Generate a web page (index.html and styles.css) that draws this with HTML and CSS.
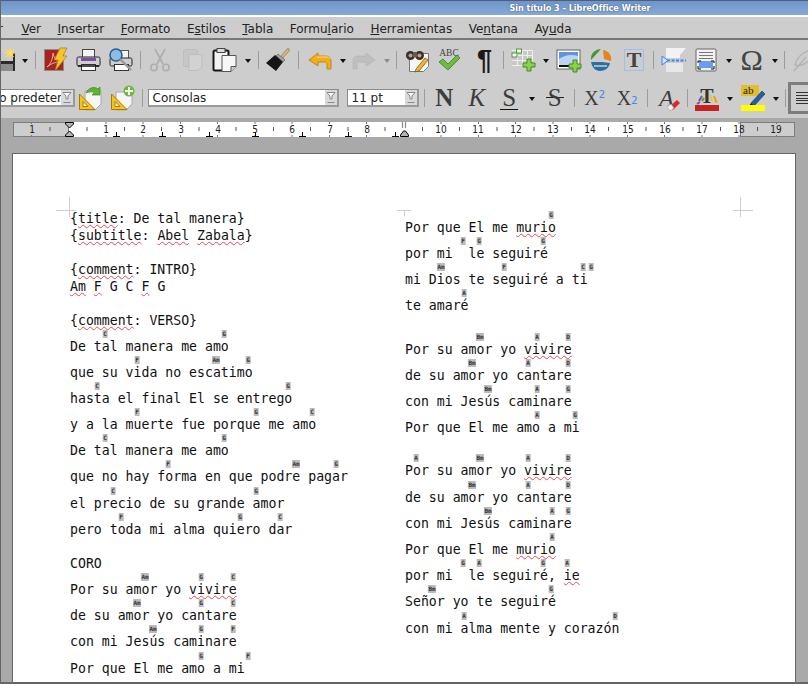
FILE: index.html
```html
<!DOCTYPE html>
<html lang="es">
<head>
    <meta charset="UTF-8">
    <title>Sin título 3 - LibreOffice Writer</title>
    <link rel="stylesheet" href="styles.css">
</head>
<body>
    <div class="titlebar"><span class="title-text">Sin título 3 - LibreOffice Writer</span></div>

    <div class="menubar">
        <span class="menu-cut">r</span>
        <span><u>V</u>er</span>
        <span><u>I</u>nsertar</span>
        <span><u>F</u>ormato</span>
        <span>E<u>s</u>tilos</span>
        <span><u>T</u>abla</span>
        <span>Formu<u>l</u>ario</span>
        <span><u>H</u>erramientas</span>
        <span>Ve<u>n</u>tana</span>
        <span>Ay<u>u</u>da</span>
    </div>

    <!-- Barra estandar -->
    <div class="toolbar row-one">
        <div class="btn"><svg width="26" height="26" viewBox="-3 0 26 26"><rect x="0" y="6" width="24" height="18" fill="#2b2b2b"/><rect x="3" y="6" width="18" height="8" fill="#c9c9c9"/><rect x="3" y="17" width="18" height="7" fill="#8c8c8c"/><circle cx="18" cy="6" r="3.5" fill="#f6d54a"/><path d="M18 0v12M12 6h12M14 2l8 8M22 2l-8 8" stroke="#f9e27c" stroke-width=".8"/></svg></div>
        <div class="arrow"></div>
        <div class="sep"></div>
        <div class="btn"><svg width="26" height="26" viewBox="0 0 26 26"><rect x="2.5" y="2.5" width="19" height="21" fill="#a92421" stroke="#8d8d8d"/><path d="M5 20c4-3 6-9 6-14 1 5 3 8 7 9-4 0-8 1-13 5z" fill="none" stroke="#e9b0a8" stroke-width="1"/><path d="M18 1h7l-4 8h4L13 24l3-11h-4z" fill="#f5c62a" stroke="#a8741a" stroke-width=".7"/></svg></div>
        <div class="btn"><svg width="26" height="26" viewBox="0 0 26 26"><rect x="7.5" y="2.5" width="12" height="8" fill="#f4f4f4" stroke="#444"/><rect x="2" y="10" width="23" height="9" rx="1.5" fill="#cfcfcf" stroke="#222"/><rect x="6" y="11" width="15" height="3" fill="#7b4fa6"/><rect x="6.5" y="17.5" width="14" height="6" fill="#fff" stroke="#333"/><path d="M3 19h21" stroke="#111" stroke-width="1.5"/></svg></div>
        <div class="btn"><svg width="26" height="26" viewBox="0 0 26 26"><rect x="10.5" y="3.5" width="11" height="8" fill="#f4f4f4" stroke="#555"/><rect x="3" y="11" width="22" height="8" rx="1.5" fill="#cfcfcf" stroke="#222"/><rect x="7.5" y="17.5" width="14" height="6" fill="#fff" stroke="#333"/><circle cx="9" cy="8" r="6" fill="#8fbce6" stroke="#28608f" stroke-width="1.6"/><path d="M13 12l11 11" stroke="#999" stroke-width="2.4"/></svg></div>
        <div class="sep"></div>
        <div class="btn"><svg width="26" height="26" viewBox="0 0 26 26" fill="none" stroke="#adadad" stroke-width="1.6"><path d="M8 2l8 15M18 2l-8 15"/><circle cx="7" cy="20.5" r="3.2"/><circle cx="19" cy="20.5" r="3.2"/></svg></div>
        <div class="btn"><svg width="26" height="26" viewBox="0 0 26 26"><rect x="3.5" y="2.5" width="14" height="17" rx="1" fill="#c6c6c6" stroke="#bdbdbd"/><path d="M9 7.500h13v12l-4 4H9z" fill="#d2d2d2" stroke="#bdbdbd"/></svg></div>
        <div class="btn"><svg width="26" height="26" viewBox="0 0 26 26"><rect x="1.500" y="3.500" width="15" height="20" rx="1.500" fill="#f2f2f2" stroke="#161616" stroke-width="2"/><rect x="5" y="1.500" width="8" height="4" fill="#ddd" stroke="#444"/><path d="M10 8.500h14v11l-5 5h-9z" fill="#f7f7f7" stroke="#555"/><path d="M24 19.500h-5v5" fill="#ccc" stroke="#555"/></svg></div>
        <div class="arrow"></div>
        <div class="sep"></div>
        <div class="btn"><svg width="26" height="26" viewBox="0 0 26 26"><path d="M16 9l6-7c2-1 3 0 2 2l-6 7z" fill="#d8b47e" stroke="#8a6c3e" stroke-width=".6"/><path d="M13 7l7 6-2 2-7-6z" fill="#a3a3a3" stroke="#555" stroke-width=".6"/><path d="M10 8l8 7-7 9-10-8z" fill="#151515"/></svg></div>
        <div class="sep"></div>
        <div class="btn btn-undo"><svg width="26" height="26" viewBox="0 0 26 26"><path d="M11 6L2 13l9 6v-4h7c1 0 2 1 2 2v5h4v-8c0-3-2-5-5-5h-8z" fill="#f0ae1a" stroke="#b77a0c" stroke-width=".8"/><path d="M10 10h10c2 0 3 1 3 2" stroke="#fbe08a" fill="none"/></svg></div>
        <div class="arrow"></div>
        <div class="btn btn-redo"><svg width="26" height="26" viewBox="0 0 26 26"><path d="M15 6l9 7-9 6v-4H8c-1 0-2 1-2 2v5H2v-8c0-3 2-5 5-5h8z" fill="#bfbfbf" stroke="#b5b5b5" stroke-width=".8"/></svg></div>
        <div class="arrow off"></div>
        <div class="sep"></div>
        <div class="btn"><svg width="26" height="26" viewBox="0 0 26 26"><path d="M5.500 6.500h19v13l-5 5h-14z" fill="#f6f6f6" stroke="#777"/><circle cx="6.500" cy="8.500" r="4.500" fill="#3a2f28"/><circle cx="15.500" cy="8.500" r="4.500" fill="#3a2f28"/><rect x="9" y="5" width="4" height="5" fill="#6a5a4e"/><circle cx="6.500" cy="8.500" r="2" fill="#b9a48e"/><circle cx="15.500" cy="8.500" r="2" fill="#b9a48e"/><path d="M12 22l9-11 3 2-9 11-4 1z" fill="#f0b52c" stroke="#6d4a10" stroke-width=".7"/></svg></div>
        <div class="btn"><svg width="26" height="26" viewBox="0 0 26 26"><text class="abc" x="13" y="9" text-anchor="middle">ABC</text><path d="M3 15l4-3 5 5 9-9 3 3-12 12z" fill="#6fbb3f" stroke="#3b7e26" stroke-width=".8"/></svg></div>
        <div class="btn btn-wide"><span class="pilcrow">¶</span></div>
        <div class="sep"></div>
        <div class="btn"><svg width="26" height="26" viewBox="0 0 26 26"><rect x="2" y="3" width="21" height="16" fill="#c9c9c9"/><path d="M2 3.500h21M2 8.500h21M2 13.500h21M2 18.500h14M7.500 3v16M12.500 3v16M17.500 3v16M22.500 3v11" stroke="#efefef" fill="none"/><rect x="6.500" y="2" width="5" height="4" fill="#fff" stroke="#4d9b2e"/><rect x="2" y="6" width="5" height="4" fill="#fff" stroke="#4d9b2e"/><path d="M17 12h4v4h4v4h-4v4h-4v-4h-4v-4h4z" fill="#8ed04c" stroke="#3e8a22"/></svg></div>
        <div class="arrow"></div>
        <div class="btn"><svg width="26" height="26" viewBox="0 0 26 26"><rect x="1" y="3" width="23" height="19" fill="#fff" stroke="#666"/><rect x="3" y="5" width="19" height="13" fill="#5f94de"/><path d="M3 12c6-4 12-5 19-3v9H3z" fill="#bcd6f2"/><rect x="3" y="18" width="19" height="2" fill="#111"/><path d="M17 13h4v4h4v4h-4v4h-4v-4h-4v-4h4z" fill="#8ed04c" stroke="#3e8a22"/></svg></div>
        <div class="btn"><svg width="26" height="26" viewBox="0 0 26 26"><path d="M3 13c-1-6 4-11 10-11z" fill="#3f9a32"/><path d="M15 3c6 1 9 6 8 11l-7-2z" fill="#e8821e"/><path d="M3 15h11l8 1c-1 5-5 8-10 8-5 0-8-4-9-9z" fill="#2c6f9e"/><path d="M6 19h13" stroke="#bcd3e6" stroke-width="1.500"/></svg></div>
        <div class="btn"><svg width="26" height="26" viewBox="0 0 26 26"><path d="M3 2.500h20M3 23.500h20M3.500 2v22M22.500 2v22" stroke="#9cc0ec" fill="none"/><text class="tbox" x="13" y="20" text-anchor="middle">T</text></svg></div>
        <div class="sep"></div>
        <div class="btn"><svg width="26" height="26" viewBox="0 0 26 26"><path d="M5 1h20l-6 7v3H5z" fill="#f2f2f2"/><rect x="5" y="16" width="17" height="9" fill="#e8e8e8"/><path d="M6 13.500h19" stroke="#3d86ea" stroke-width="2" stroke-dasharray="3 1.500"/><path d="M1 9l6 4.500L1 18z" fill="#cfe2fa" stroke="#3d86ea"/></svg></div>
        <div class="btn"><svg width="26" height="26" viewBox="0 0 26 26"><rect x="3" y="2" width="20" height="22" rx="1" fill="#f2f2f2" stroke="#666"/><path d="M6 5.500h14M6 8.500h14M6 11.500h14" stroke="#777"/><rect x="6" y="14" width="14" height="7" fill="#6a9cf0"/><path d="M5 16v-2h3M21 16v-2h-3M5 19v3h3M21 19v3h-3" stroke="#111" fill="none"/></svg></div>
        <div class="arrow"></div>
        <div class="btn"><span class="omega">Ω</span></div>
        <div class="arrow"></div>
        <div class="sep"></div>
        <div class="btn"><svg width="26" height="26" viewBox="0 0 26 26" fill="none" stroke="#b3b3b3" stroke-width="1.400"><path d="M3 18C5 10 12 4 22 2c-1 9-7 15-15 17zM2 24l12-14"/></svg></div>
    </div>

    <!-- Barra de formato -->
    <div class="toolbar row-two">
        <div class="combo combo-style"><span class="combo-text">Estilo predeterminado</span><span class="combo-btn"><svg width="12" height="15" viewBox="0 0 12 15"><path d="M2 2.500h8L7 6v3H5V6z" fill="#fff" stroke="#888"/><path d="M2.500 12.500h7" stroke="#888"/></svg></span></div>
        <div class="btn btn-first"><svg width="26" height="28" viewBox="0 0 26 28"><path d="M8 7h16v13l-6 6H8z" fill="#f5f5f5" stroke="#aaa"/><path d="M2.500 10v15.500H18z" fill="#f3c41d" stroke="#a9780d"/><path d="M6 17.500v5h5z" fill="#f5f5f5" stroke="#a9780d"/><path d="M9 9c2-5 8-7 12-4l2-2v8h-8l2-2c-2-2-5-1-8 0z" fill="#5fb52f" stroke="#3a8a1c" stroke-width=".7"/></svg></div>
        <div class="btn"><svg width="26" height="28" viewBox="0 0 26 28"><path d="M6 8h16v12l-6 6H6z" fill="#f5f5f5" stroke="#aaa"/><path d="M1.500 10v15.500H17z" fill="#f3c41d" stroke="#a9780d"/><path d="M5 17.500v5h5z" fill="#f5f5f5" stroke="#a9780d"/><circle cx="19" cy="7" r="5.500" fill="#6cbb3a"/><path d="M19 3v8M15 7h8" stroke="#fff" stroke-width="2"/></svg></div>
        <div class="sep"></div>
        <div class="combo combo-font"><span class="combo-text">Consolas</span><span class="combo-btn"><svg width="12" height="15" viewBox="0 0 12 15"><path d="M2 2.500h8L7 6v3H5V6z" fill="#fff" stroke="#888"/><path d="M2.500 12.500h7" stroke="#888"/></svg></span></div>
        <div class="combo combo-size"><span class="combo-text">11 pt</span><span class="combo-btn"><svg width="12" height="15" viewBox="0 0 12 15"><path d="M2 2.500h8L7 6v3H5V6z" fill="#fff" stroke="#888"/><path d="M2.500 12.500h7" stroke="#888"/></svg></span></div>
        <div class="sep"></div>
        <div class="btn letter bold">N</div>
        <div class="btn letter italic">K</div>
        <div class="btn letter under">S</div>
        <div class="arrow"></div>
        <div class="btn letter strike">S</div>
        <div class="sep"></div>
        <div class="btn letter script">X<sup>2</sup></div>
        <div class="btn letter script">X<sub>2</sub></div>
        <div class="sep"></div>
        <div class="btn"><svg width="26" height="28" viewBox="0 0 26 28"><text class="clear-a" x="5" y="22">A</text><path d="M16 22l7-6 3 3-7 7z" fill="#d92b2b"/><path d="M13 23l4-3 3 4-4 3z" fill="#f4f4f4" stroke="#999" stroke-width=".6"/></svg></div>
        <div class="sep"></div>
        <div class="btn"><svg width="26" height="28" viewBox="0 0 26 28"><text class="color-t" x="13" y="19" text-anchor="middle">T</text><path d="M5 17l3-5M3 20l3-2" stroke="#7b4fa6" stroke-width="2"/><path d="M20 12l2 5M23 18l-2-1" stroke="#ef9a1d" stroke-width="2"/><path d="M16 11l2 6" stroke="#e5c91f" stroke-width="2"/><path d="M8 17l2-3" stroke="#43a23a" stroke-width="2"/><rect x="1" y="21" width="24" height="6" fill="#c62222"/></svg></div>
        <div class="arrow"></div>
        <div class="btn"><svg width="26" height="28" viewBox="0 0 26 28"><rect x="1" y="1" width="18" height="11" fill="#e0be2e"/><text class="ab" x="3" y="10">ab</text><path d="M11 19l11-12 3 3-11 12z" fill="#24609e" stroke="#12355c" stroke-width=".6"/><path d="M11 19l3 3-5 0z" fill="#222"/><rect x="1" y="21" width="24" height="6" fill="#ffff00"/></svg></div>
        <div class="arrow"></div>
        <div class="sep"></div>
        <div class="linebox"><span></span><span></span><span></span><span></span><span></span></div>
    </div>

    <!-- Regla -->
    <div class="ruler-band">
        <svg class="ruler" width="808" height="16" viewBox="0 0 808 16">
            <rect x="68" y="0" width="672" height="15" fill="#fff"/>
            <rect x="13.500" y=".5" width="55" height="14" fill="#cdcdcd" stroke="#7d7d7d"/>
            <rect x="740.500" y=".5" width="54" height="14" fill="#cdcdcd" stroke="#7d7d7d"/>
            <path stroke="#555" fill="none" d="M50 5v4M87 5v4M124.500 5v4M161.500 5v4M199 5v4M236 5v4M273.500 5v4M310.500 5v4M348 5v4M385 5v4M422.500 5v4M459.500 5v4M497 5v4M534 5v4M571.500 5v4M608.500 5v4M646 5v4M683 5v4M720.500 5v4M757.500 5v4"/>
            <path stroke="#777" fill="none" d="M31.500 0v2M31.500 13v2M106 0v2M106 13v2M143 0v2M143 13v2M180.500 0v2M180.500 13v2M217.500 0v2M217.500 13v2M255 0v2M255 13v2M292 0v2M292 13v2M329.500 0v2M329.500 13v2M366.500 0v2M366.500 13v2M441 0v2M441 13v2M478.500 0v2M478.500 13v2M515.500 0v2M515.500 13v2M553 0v2M553 13v2M590 0v2M590 13v2M627.500 0v2M627.500 13v2M664.500 0v2M664.500 13v2M702 0v2M702 13v2M739 0v2M739 13v2M776.500 0v2M776.500 13v2"/>
            <path stroke="#000" fill="none" d="M116.500 10v4M113 14.500h7M162.500 10v4M159 14.500h7M209.500 10v4M206 14.500h7M255.500 10v4M252 14.500h7M302.500 10v4M299 14.500h7M348.500 10v4M345 14.500h7M395.500 10v4M392 14.500h7"/>
            <g class="rnum" text-anchor="middle">
                <text x="32" y="11">1</text><text x="106" y="11">1</text><text x="143" y="11">2</text><text x="181" y="11">3</text><text x="218" y="11">4</text><text x="255" y="11">5</text><text x="292" y="11">6</text><text x="330" y="11">7</text><text x="367" y="11">8</text><text x="441" y="11">10</text><text x="478" y="11">11</text><text x="516" y="11">12</text><text x="553" y="11">13</text><text x="590" y="11">14</text><text x="628" y="11">15</text><text x="665" y="11">16</text><text x="702" y="11">17</text><text x="739" y="11">18</text><text x="776" y="11">19</text>
            </g>
            <path d="M65.500.5h8v1.500L69.500 6l-4-4zM65.500 14.500h8V13l-4-4-4 4z" fill="#b5b5b5" stroke="#000"/>
            <path d="M402.500 0v6M405.500 0v6" stroke="#8a8a8a" stroke-width="1.200"/>
            <path d="M400.500 14.500h8V13l-3-4h-2l-3 4z" fill="#b5b5b5" stroke="#000"/>
        </svg>
    </div>

    <div class="workspace">
        <div class="page">
            <svg class="marks" width="784" height="70" viewBox="0 0 784 70">
                <path stroke="#cfcfcf" fill="none" d="M43 56.500h20M56.500 43v20M384 56.500h14M391.500 56.500v6M720 56.500h20M727.500 43v20"/>
            </svg>
            <div class="col">
                <div class="plain">{<u>title</u>: De tal manera}</div>
                <div class="plain">{<u>subtitle</u>: <u>Abel</u> <u>Zabala</u>}</div>
                <div class="plain block">{<u>comment</u>: INTRO}</div>
                <div class="plain"><u>Am</u> <u>F</u> G C <u>F</u> G</div>
                <div class="plain block">{<u>comment</u>: VERSO}</div>

                <div class="lyric first"><span class="ch" style="left:35px">C</span><span class="ch" style="left:154px">G</span>De tal manera me amo</div>
                <div class="lyric"><span class="ch" style="left:67px">F</span><span class="ch" style="left:146px">Am</span><span class="ch" style="left:178px">G</span>que su vida no escatimo</div>
                <div class="lyric"><span class="ch" style="left:27px">C</span><span class="ch" style="left:218px">G</span>hasta el final El se entrego</div>
                <div class="lyric"><span class="ch" style="left:67px">F</span><span class="ch" style="left:186px">G</span><span class="ch" style="left:242px">C</span>y a la muerte fue porque me amo</div>
                <div class="lyric"><span class="ch" style="left:35px">C</span><span class="ch" style="left:154px">G</span>De tal manera me amo</div>
                <div class="lyric"><span class="ch" style="left:98px">F</span><span class="ch" style="left:226px">Am</span><span class="ch" style="left:266px">G</span>que no hay forma en que podre pagar</div>
                <div class="lyric"><span class="ch" style="left:43px">C</span><span class="ch" style="left:186px">G</span>el precio de su grande amor</div>
                <div class="lyric"><span class="ch" style="left:51px">F</span><span class="ch" style="left:170px">G</span><span class="ch" style="left:210px">C</span>pero toda mi alma quiero dar</div>

                <div class="plain coro">CORO</div>
                <div class="lyric first"><span class="ch" style="left:75px">Am</span><span class="ch" style="left:131px">G</span><span class="ch" style="left:163px">C</span>Por su amor yo <u>vivire</u></div>
                <div class="lyric"><span class="ch" style="left:67px">Am</span><span class="ch" style="left:131px">G</span><span class="ch" style="left:163px">C</span>de su amor yo cantare</div>
                <div class="lyric"><span class="ch" style="left:83px">Am</span><span class="ch" style="left:131px">G</span><span class="ch" style="left:163px">F</span>con mi Jesús caminare</div>
                <div class="lyric"><span class="ch" style="left:131px">G</span><span class="ch" style="left:178px">F</span>Por que El me amo a mi</div>
            </div>
            <div class="col col-right">
                <div class="lyric"><span class="ch" style="left:146px">G</span>Por que El me <u>murio</u></div>
                <div class="lyric"><span class="ch" style="left:58px">F</span><span class="ch" style="left:74px">G</span><span class="ch" style="left:138px">G</span>por mi  le seguiré</div>
                <div class="lyric"><span class="ch" style="left:36px">Am</span><span class="ch" style="left:99px">F</span><span class="ch" style="left:178px">C</span><span class="ch" style="left:186px">G</span>mi Dios te seguiré a ti</div>
                <div class="lyric"><span class="ch" style="left:59px">A</span>te amaré</div>

                <div class="lyric stanza"><span class="ch" style="left:75px">Bm</span><span class="ch" style="left:132px">A</span><span class="ch" style="left:163px">D</span>Por su amor yo <u>vivire</u></div>
                <div class="lyric"><span class="ch" style="left:67px">Bm</span><span class="ch" style="left:123px">A</span><span class="ch" style="left:163px">D</span>de su amor yo cantare</div>
                <div class="lyric"><span class="ch" style="left:83px">Bm</span><span class="ch" style="left:132px">A</span><span class="ch" style="left:163px">G</span>con mi Jesús caminare</div>
                <div class="lyric"><span class="ch" style="left:132px">A</span><span class="ch" style="left:170px">G</span>Por que El me amo a mi</div>

                <div class="lyric stanza"><span class="ch" style="left:11px">A</span><span class="ch" style="left:75px">Bm</span><span class="ch" style="left:123px">A</span><span class="ch" style="left:163px">D</span>Por su amor yo <u>vivire</u></div>
                <div class="lyric"><span class="ch" style="left:67px">Bm</span><span class="ch" style="left:123px">A</span><span class="ch" style="left:163px">D</span>de su amor yo cantare</div>
                <div class="lyric"><span class="ch" style="left:83px">Bm</span><span class="ch" style="left:147px">A</span><span class="ch" style="left:163px">G</span>con mi Jesús caminare</div>
                <div class="lyric"><span class="ch" style="left:147px">A</span>Por que El me <u>murio</u></div>
                <div class="lyric"><span class="ch" style="left:58px">G</span><span class="ch" style="left:74px">A</span><span class="ch" style="left:138px">G</span><span class="ch" style="left:162px">A</span>por mi  le seguiré, <u>ie</u></div>
                <div class="lyric"><span class="ch" style="left:27px">Bm</span><span class="ch" style="left:146px">G</span>Señor yo te seguiré</div>
                <div class="lyric"><span class="ch" style="left:59px">A</span><span class="ch" style="left:210px">D</span>con mi alma mente y corazón</div>
            </div>
        </div>
    </div>
</body>
</html>
```

FILE: styles.css
```css
html, body {
    margin: 0;
    height: 684px;
    overflow: hidden;
}
body {
    display: flex;
    flex-direction: column;
    font-family: "DejaVu Sans", sans-serif;
    background-color: #cdcdcd;
    color: #222;
    border-left: 1px solid #666;
    border-bottom: 2px solid #666;
    box-sizing: border-box;
}

.titlebar {
    flex: none;
    height: 17px;
    box-sizing: border-box;
    padding-left: 351px;
    display: flex;
    justify-content: center;
    align-items: center;
    background: linear-gradient(#6f95c9, #86a9d6);
    border-top: 1px solid #4d5f7b;
    border-bottom: 2px solid #fff;
}
.title-text {
    font-family: "DejaVu Sans Condensed", "DejaVu Sans", sans-serif;
    font-size: 9px;
    font-weight: bold;
    color: #fff;
    text-shadow: 0 0 2px #456;
}

.menubar {
    flex: none;
    height: 23px;
    box-sizing: border-box;
    padding-top: 2px;
    display: flex;
    align-items: center;
    gap: 16.5px;
    font-size: 12px;
    margin-left: -3px;
    border-bottom: 2px solid #777;
}
.menu-cut {
    margin-right: 2px;
}

.toolbar {
    flex: none;
    display: flex;
    align-items: center;
    overflow: hidden;
}
.row-one {
    height: 40px;
}
.row-one .btn:first-child {
    margin-left: -15px;
}
.row-two {
    height: 38px;
    box-sizing: border-box;
    padding-bottom: 2px;
}
.btn {
    flex: none;
    width: 32.5px;
    display: flex;
    justify-content: center;
    align-items: center;
}
.btn-wide {
    width: 34px;
}
.btn-undo {
    margin-left: 2px;
}
.btn-redo {
    margin-left: -2px;
}
.arrow {
    flex: none;
    width: 13px;
    display: flex;
    justify-content: center;
}
.arrow::after {
    content: "";
    border-left: 3.5px solid transparent;
    border-right: 3.5px solid transparent;
    border-top: 4px solid #111;
    margin-top: 2px;
}
.arrow.off::after {
    border-top-color: #8c8c8c;
}
.sep {
    flex: none;
    width: 7.5px;
    height: 18px;
    background: linear-gradient(#9c9c9c, #9c9c9c) center / 1px 100% no-repeat;
}

.abc {
    font-family: "Liberation Serif", serif;
    font-size: 9.5px;
    fill: #444;
}
.pilcrow {
    font-family: "Liberation Sans", sans-serif;
    font-weight: bold;
    font-size: 27px;
    line-height: 26px;
    margin-left: 4px;
    color: #1a1a1a;
}
.omega {
    font-family: "Liberation Serif", serif;
    font-size: 30px;
    line-height: 26px;
    color: #444;
}
.tbox {
    font-family: "Liberation Serif", serif;
    font-weight: bold;
    font-size: 22px;
    fill: #444;
}

.combo {
    flex: none;
    height: 18px;
    display: flex;
    align-items: stretch;
    box-sizing: border-box;
    background-color: #fff;
    border: 1px solid #8a8a8a;
    border-right: 2px solid #9a9a9a;
    border-bottom: 2px solid #9a9a9a;
    font-size: 12px;
    line-height: 16px;
}
.combo-text {
    flex: 1;
    padding-left: 4px;
    overflow: hidden;
    white-space: nowrap;
}
.combo-btn {
    flex: none;
    width: 12px;
    background-color: #d9d9d9;
}
.combo-style {
    width: 106px;
    margin-left: -32px;
}
.combo-font {
    width: 191px;
    margin-left: 1px;
}
.combo-size {
    width: 72px;
    margin-left: 8px;
    margin-right: 2px;
}
.btn-first {
    margin-left: -1px;
}

.letter {
    font-family: "Liberation Serif", serif;
    font-size: 25px;
    color: #3c3c3c;
    line-height: 28px;
}
.bold {
    font-weight: bold;
}
.italic {
    font-style: italic;
}
.under {
    background: linear-gradient(#111, #111) center 25px / 18px 1px no-repeat;
    height: 28px;
}
.strike {
    background: linear-gradient(#222, #222) center 13px / 18px 1px no-repeat;
    height: 28px;
}
.script {
    font-size: 20px;
}
.script sup, .script sub {
    position: relative;
    font-family: "DejaVu Sans", sans-serif;
    font-size: 10px;
    color: #3d86ea;
    line-height: 0;
}
.script sup {
    top: -3px;
}
.script sub {
    top: 3px;
}

.clear-a {
    font-family: "Liberation Serif", serif;
    font-style: italic;
    font-size: 24px;
    fill: #3c3c3c;
}
.color-t {
    font-family: "Liberation Serif", serif;
    font-weight: bold;
    font-size: 20px;
    fill: #333;
}
.ab {
    font-family: "Liberation Serif", serif;
    font-size: 11px;
    fill: #222;
}

.linebox {
    flex: none;
    width: 30px;
    height: 32px;
    margin-left: -2px;
    box-sizing: border-box;
    padding: 7px 5px;
    display: flex;
    flex-direction: column;
    justify-content: space-between;
    background-color: #cdcdcd;
    border: 3px solid #7d7d7d;
}
.linebox span {
    height: 1px;
    background-color: #333;
}

.ruler-band {
    flex: none;
    height: 35px;
    box-sizing: border-box;
    padding-top: 4px;
    margin-left: -1px;
    background-color: #a9a9a9;
}
.ruler {
    display: block;
}
.rnum {
    font-family: "DejaVu Sans Condensed", "Liberation Sans", sans-serif;
    font-size: 10px;
    fill: #222;
}

.workspace {
    flex: 1;
    min-height: 0;
    padding-left: 11px;
    background-color: #a9a9a9;
}
.page {
    position: relative;
    width: 784px;
    height: 100%;
    box-sizing: border-box;
    padding: 56px 0 0 57px;
    display: grid;
    grid-template-columns: 335px 1fr;
    align-items: start;
    overflow: hidden;
    background-color: #fff;
    border-left: 1px solid #666;
    border-top: 1px solid #666;
    border-right: 1px solid #666;
    font-family: "DejaVu Sans Mono", monospace;
    font-size: 13.2px;
    color: #111;
}
.marks {
    position: absolute;
    left: 0;
    top: 0;
}
.col-right {
    padding-top: 4.6px;
}
.plain {
    line-height: 17.4px;
    white-space: pre;
}
.plain.block {
    margin-top: 16px;
}
.plain.coro {
    margin-top: 12px;
}
.lyric {
    position: relative;
    line-height: 26.2px;
    height: 26.2px;
    white-space: pre;
}
.lyric.first {
    margin-top: 4.5px;
}
.lyric.stanza {
    margin-top: 17.2px;
}
.page u {
    text-decoration: underline wavy #f0474b 1px;
    text-underline-offset: 1px;
}
.ch {
    position: absolute;
    top: -4px;
    height: 8px;
    padding: 0 .5px;
    transform: translateX(-50%);
    background-color: #bbb;
    color: #333;
    font-size: 6px;
    font-weight: bold;
    line-height: 8px;
}
```
